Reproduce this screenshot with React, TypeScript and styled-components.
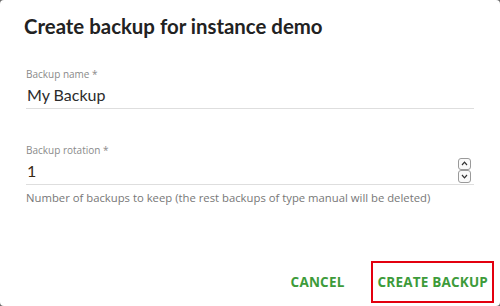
import React from 'react';
import styled, { createGlobalStyle } from 'styled-components';

const GlobalStyle = createGlobalStyle`
  html, body {
    margin: 0;
    padding: 0;
    background: #6b6b6b;
  }
  * {
    box-sizing: border-box;
  }
`;

const Dialog = styled.div`
  width: 500px;
  height: 306px;
  background: #fff;
  border-radius: 4px;
  display: flex;
  flex-direction: column;
  overflow: hidden;
`;

const Title = styled.h2`
  margin: 13px 0 0 24px;
  font-family: 'Lato', 'Open Sans', sans-serif;
  font-size: 20.4px;
  line-height: 26px;
  font-weight: 700;
  color: #222;
`;

const Content = styled.div`
  display: flex;
  flex-direction: column;
  gap: 34px;
  padding: 28px 26px 0 26px;
`;

const Field = styled.div`
  display: flex;
  flex-direction: column;
`;

const Label = styled.label`
  font-family: 'Open Sans', sans-serif;
  font-size: 10px;
  line-height: 14px;
  color: #8a8a8a;
`;

const InputRow = styled.div`
  display: flex;
  align-items: center;
  height: 28px;
  border-bottom: 1px solid #dedede;
`;

const Value = styled.span<{ $tone?: string }>`
  flex: 1;
  font-family: 'Lato', 'Open Sans', sans-serif;
  font-size: 16px;
  line-height: 20px;
  color: ${({ $tone }) => $tone || '#2b2b2b'};
  padding-left: 1px;
`;

const Spinner = styled.div`
  display: flex;
  flex-direction: column;
  margin: 0 3px 1px 0;
`;

const SpinButton = styled.div`
  width: 13px;
  height: 12.5px;
  border: 1px solid #9a9a9a;
  border-radius: 3px;
  display: flex;
  align-items: center;
  justify-content: center;
  background: #fafafa;
  svg {
    display: block;
  }
`;

const Helper = styled.div`
  font-family: 'Open Sans', sans-serif;
  font-size: 11.3px;
  line-height: 16px;
  color: #777;
  margin-top: 5px;
`;

const Actions = styled.div`
  margin-top: auto;
  display: flex;
  justify-content: flex-end;
  align-items: center;
  gap: 21px;
  padding: 0 6px 3px 0;
`;

const Button = styled.button<{ $focused?: boolean }>`
  height: 42px;
  padding: 0 4px;
  background: transparent;
  border: 2px solid ${({ $focused }) => ($focused ? '#e3000f' : 'transparent')};
  font-family: 'Open Sans', sans-serif;
  font-size: 13.5px;
  font-weight: 700;
  color: #3d9b3a;
  letter-spacing: 0.2px;
  cursor: pointer;
`;

const Chevron: React.FC<{ up?: boolean }> = ({ up }) => (
  <svg width="7" height="5" viewBox="0 0 7 5">
    <path
      d={up ? 'M1 4 L3.5 1.2 L6 4' : 'M1 1 L3.5 3.8 L6 1'}
      fill="none"
      stroke="#333"
      strokeWidth="1.2"
    />
  </svg>
);

const App: React.FC = () => {
  return (
    <>
      <GlobalStyle />
      <Dialog>
        <Title>Create backup for instance demo</Title>
        <Content>
          <Field>
            <Label>Backup name *</Label>
            <InputRow>
              <Value>My Backup</Value>
            </InputRow>
          </Field>
          <Field>
            <Label>Backup rotation *</Label>
            <InputRow>
              <Value $tone="#3a2a12">1</Value>
              <Spinner>
                <SpinButton>
                  <Chevron up />
                </SpinButton>
                <SpinButton>
                  <Chevron />
                </SpinButton>
              </Spinner>
            </InputRow>
            <Helper>Number of backups to keep (the rest backups of type manual will be deleted)</Helper>
          </Field>
        </Content>
        <Actions>
          <Button>CANCEL</Button>
          <Button $focused>CREATE BACKUP</Button>
        </Actions>
      </Dialog>
    </>
  );
};

export default App;
